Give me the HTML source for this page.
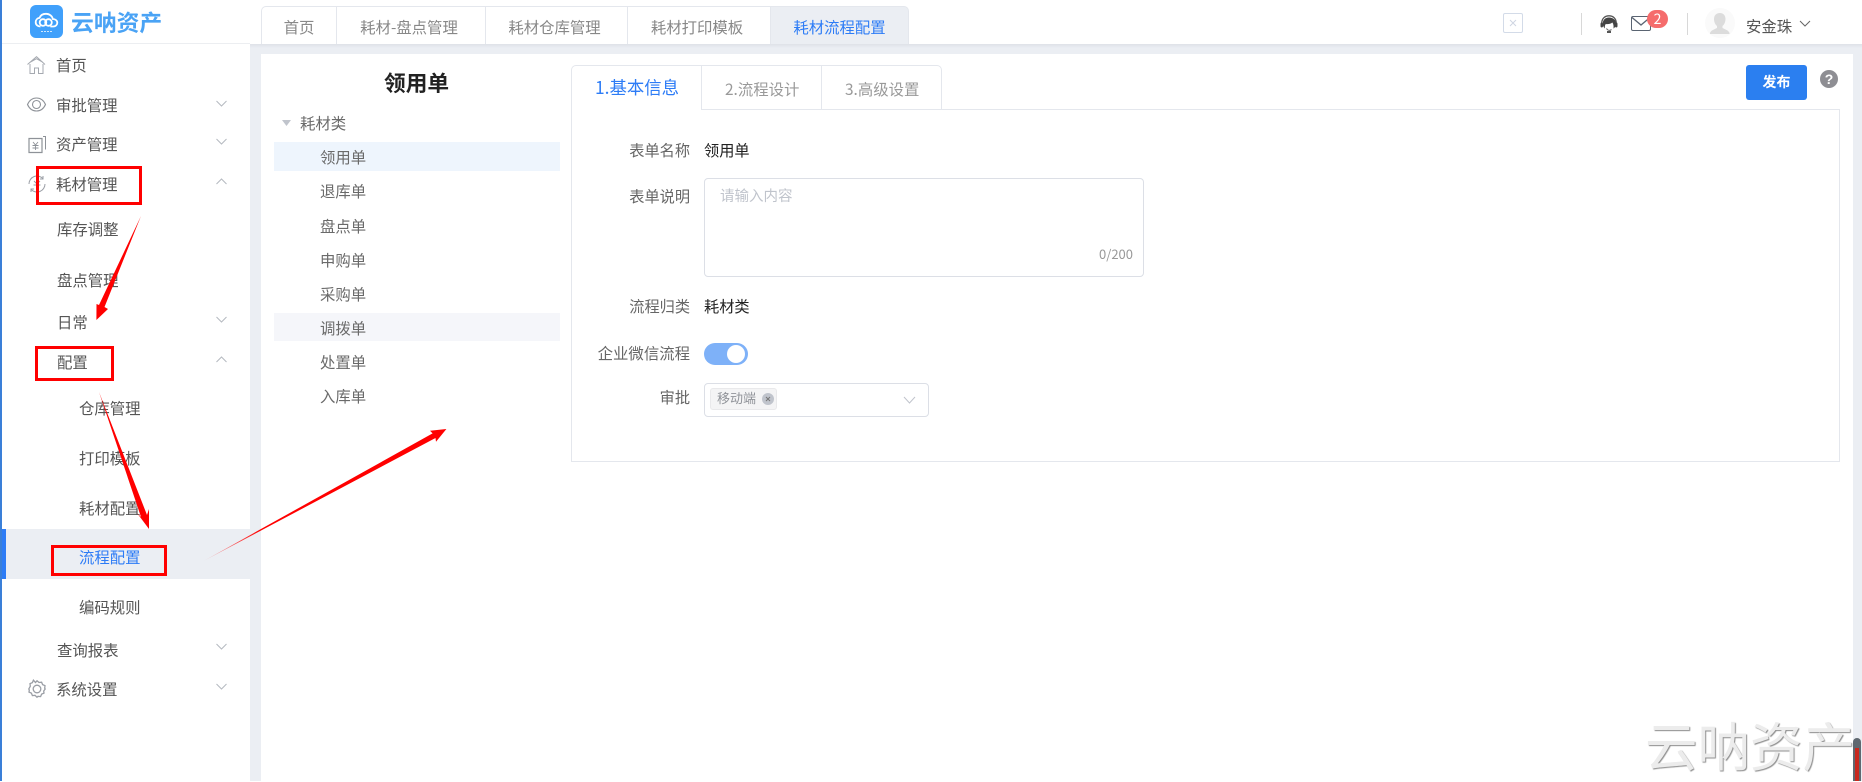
<!DOCTYPE html>
<html lang="zh">
<head>
<meta charset="utf-8">
<title>云呐资产</title>
<style>
html,body{margin:0;padding:0;background:#fff}
body{position:relative;width:1862px;height:781px;overflow:hidden;font-family:"Noto Sans CJK SC","Liberation Sans",sans-serif;color:#555}
div,span{box-sizing:border-box}
.a{position:absolute}
.t{position:absolute;white-space:nowrap;line-height:20px;height:20px;font-size:15.4px;color:#555}
.tab{position:absolute;top:6px;height:38px;background:#fff;border:1px solid #e4e7ed;border-bottom:0;border-left:0;text-align:center;line-height:40px;font-size:15.4px;color:#888}
.it{color:#6a6a6a}
.lb{position:absolute;white-space:nowrap;line-height:20px;height:20px;font-size:15.2px;color:#666;right:1172px;text-align:right}
.val{position:absolute;white-space:nowrap;line-height:20px;height:20px;font-size:15.2px;color:#222;left:704px}
.rb{position:absolute;border:3px solid #f00;box-sizing:border-box}
svg{position:absolute;overflow:visible}
</style>
</head>
<body>
<!-- page backgrounds -->
<div class="a" style="left:250px;top:44px;width:1612px;height:737px;background:#ebeef3"></div>
<div class="a" style="left:250px;top:44px;width:1612px;height:4px;background:linear-gradient(#dfe2e8,#ebeef3)"></div>
<div class="a" style="left:261px;top:54px;width:1592px;height:727px;background:#fff"></div>
<div class="a" style="left:0;top:0;width:1.500px;height:781px;background:#3a7fd8"></div>
<div class="a" style="left:2px;top:43px;width:248px;height:1px;background:#eceef1"></div>

<!-- logo -->
<div class="a" style="left:30px;top:5px;width:33px;height:33px;border-radius:6px;background:#40a0fb"></div>
<svg style="left:30px;top:5px" width="33" height="33" viewBox="0 0 33 33" fill="none" stroke="#fff" stroke-width="1.800"><path d="M10.500 21.500c-2.800 0-4.800-1.800-4.800-4.300 0-2.300 1.600-4 3.800-4.300C10.500 10.300 13 8.800 16 8.800c3.500 0 6.300 2.300 6.800 5.200 2.400.2 4.500 1.500 4.500 3.800 0 2.200-1.900 3.700-4 3.700h-3"/><circle cx="13" cy="17.500" r="3.300"/><circle cx="18.500" cy="17.500" r="3.300"/><path d="M11 26.500h11" stroke-width="1" stroke-dasharray="2 1" opacity=".75"/></svg>
<div class="t" style="left:71px;top:12px;font-size:22.800px;font-weight:700;color:#4aa3f5">云呐资产</div>

<!-- top tabs -->
<div class="tab" style="left:261px;width:76px;border-left:1px solid #e4e7ed;border-top-left-radius:5px">首页</div>
<div class="tab" style="left:337px;width:149px;padding-right:4px">耗材-盘点管理</div>
<div class="tab" style="left:486px;width:142px;padding-right:4px">耗材仓库管理</div>
<div class="tab" style="left:628px;width:143px;padding-right:4px">耗材打印模板</div>
<div class="tab" style="left:771px;width:138px;background:#ebeef3;color:#2d7cf6;border-top-right-radius:5px">耗材流程配置</div>

<!-- header right -->
<div class="a" style="left:1503px;top:13px;width:20px;height:20px;border:1px solid #d3dbe8;border-radius:2px"></div>
<svg style="left:1503px;top:13px" width="20" height="20" fill="none" stroke="#cfd6e2" stroke-width="1"><path d="M7 7l6 6M13 7l-6 6"/></svg>
<div class="a" style="left:1581px;top:13px;width:1px;height:22px;background:#d8d8d8"></div>
<div class="a" style="left:1687px;top:13px;width:1px;height:22px;background:#d8d8d8"></div>
<svg style="left:1600px;top:15px" width="18" height="18" viewBox="0 0 18 18"><path d="M9 2.500C5 2.500 2.800 5 2.800 8.500c0 2.500 1 4 2 5 0-2 0-3.500 1-4.500 2 .3 5 0 6.500-1.500.8 1 1.500 2.500 1.200 6 1.500-1 2.700-2.800 2.700-5C16.200 5 13 2.500 9 2.500z" fill="#444"/><path d="M1.800 9V8C1.800 3.500 5 .8 9 .8s7.200 2.700 7.200 7.200v1" fill="none" stroke="#555" stroke-width="1.300"/><rect x=".5" y="7.500" width="2.500" height="5" rx="1.200" fill="#444"/><rect x="15" y="7.500" width="2.500" height="5" rx="1.200" fill="#444"/><path d="M6.500 13.500c1 2 3.500 2.500 5 1" fill="none" stroke="#666" stroke-width="1"/><path d="M7 16h4v2H7z" fill="#555"/></svg>
<div class="a" style="left:1631px;top:16px;width:20px;height:15px;border:1.500px solid #5a6472;border-radius:2px"></div>
<svg style="left:1631px;top:16px" width="20" height="15" fill="none" stroke="#5a6472" stroke-width="1.300"><path d="M1 1.500l9 7.500 9-7.500"/></svg>
<div class="a" style="left:1647px;top:10px;width:21px;height:18px;border-radius:9px;background:#f56c6c;color:#fff;font-size:14px;line-height:18px;text-align:center">2</div>
<div class="a" style="left:1705px;top:8px;width:30px;height:30px;border-radius:50%;background:#fafafa"></div>
<svg style="left:1705px;top:8px" width="30" height="30" viewBox="0 0 30 30"><path d="M15 5c3.500 0 5.500 2.500 5.500 6 0 3-1.200 5.500-3 7v2c2 1.200 6 2 7 5v1H5v-1c1-3 5-3.800 7-5v-2c-1.800-1.500-3-4-3-7 0-3.500 2-6 6-6z" fill="#dcdcdc"/></svg>
<div class="t" style="left:1746px;top:16px;color:#555">安金珠</div>
<svg style="left:1799px;top:20px" width="12" height="8" fill="none" stroke="#666" stroke-width="1"><path d="M1 1l5 5 5-5"/></svg>

<!-- sidebar -->
<div class="a" style="left:2px;top:529px;width:248px;height:50px;background:#ebeef3"></div>
<div class="a" style="left:2px;top:529px;width:4px;height:50px;background:#2d7cf6"></div>

<svg style="left:27px;top:56px" width="19" height="18" viewBox="0 0 19 18" fill="none" stroke="#a5a9b0" stroke-width="1"><path d="M.5 8.500L9.500.7l8.500 7.800M3 8v9.500h4.500v-5.500h4v5.500H16V8M3.500 6L9.500 2.700 15.500 6"/></svg>
<svg style="left:27px;top:96px" width="19" height="17" viewBox="0 0 19 17" fill="none" stroke="#8e9298" stroke-width="1.100"><path d="M.5 8.500C2.500 4 6 2 9.500 2s7 2 9 6.500c-2 4.500-5.500 6.500-9 6.500s-7-2-9-6.500z"/><circle cx="9.500" cy="8.500" r="4"/></svg>
<svg style="left:28px;top:134px" width="18" height="20" viewBox="0 0 18 20" fill="none" stroke="#8e9298" stroke-width="1"><path d="M1 4.500h13v14H1z" stroke-width="1.200"/><path d="M15 2.500h2.500v13"/><path d="M5 8l2.500 3L10 8M4.500 11.500h6M4.500 14h6M7.500 11v5" stroke-width=".9"/></svg>
<svg style="left:28px;top:175px" width="18" height="18" viewBox="0 0 18 18" fill="none" stroke="#9a9ea5" stroke-width="1"><path d="M1 9a8 8 0 0 1 14-5.300M17 9A8 8 0 0 1 3 14.300M15 1v3h-3M3 17v-3h3"/><path d="M6 6l3 3 3-3M5.500 10h7M9 9v5"/></svg>
<svg style="left:28px;top:680px" width="18" height="18" viewBox="0 0 18 18" fill="none" stroke="#9a9ea5" stroke-width="1.300"><path d="M9 .8l2 1.700 2.600-.3 1 2.400 2.400 1-.3 2.600L17.200 9l-1.500 2 .3 2.100-2.400 1-1 2.500-2.600-.3L9 17.200l-2-1.900-2.600.3-1-2.500-2.400-1 .3-2.100L.8 9l1.500-2.800L2 3.600l2.400-1 1-2.400L7.500 2.500z"/><circle cx="9" cy="9" r="3.800"/></svg>

<div class="t" style="left:56px;top:55px">首页</div>
<div class="t" style="left:56px;top:95px">审批管理</div>
<div class="t" style="left:56px;top:134px">资产管理</div>
<div class="t" style="left:56px;top:174px">耗材管理</div>
<div class="t" style="left:57px;top:219px">库存调整</div>
<div class="t" style="left:57px;top:270px">盘点管理</div>
<div class="t" style="left:57px;top:312px">日常</div>
<div class="t" style="left:57px;top:352px">配置</div>
<div class="t" style="left:79px;top:398px">仓库管理</div>
<div class="t" style="left:79px;top:448px">打印模板</div>
<div class="t" style="left:79px;top:498px">耗材配置</div>
<div class="t" style="left:79px;top:547px;color:#2d7cf6">流程配置</div>
<div class="t" style="left:79px;top:597px">编码规则</div>
<div class="t" style="left:57px;top:640px">查询报表</div>
<div class="t" style="left:56px;top:679px">系统设置</div>

<svg style="left:216px;top:100px" width="11" height="7" fill="none" stroke="#b5b9c0" stroke-width="1"><path d="M.5 1l5 5 5-5"/></svg>
<svg style="left:216px;top:138px" width="11" height="7" fill="none" stroke="#b5b9c0" stroke-width="1"><path d="M.5 1l5 5 5-5"/></svg>
<svg style="left:216px;top:178px" width="11" height="7" fill="none" stroke="#b5b9c0" stroke-width="1"><path d="M.5 6l5-5 5 5"/></svg>
<svg style="left:216px;top:316px" width="11" height="7" fill="none" stroke="#b5b9c0" stroke-width="1"><path d="M.5 1l5 5 5-5"/></svg>
<svg style="left:216px;top:356px" width="11" height="7" fill="none" stroke="#b5b9c0" stroke-width="1"><path d="M.5 6l5-5 5 5"/></svg>
<svg style="left:216px;top:643px" width="11" height="7" fill="none" stroke="#b5b9c0" stroke-width="1"><path d="M.5 1l5 5 5-5"/></svg>
<svg style="left:216px;top:683px" width="11" height="7" fill="none" stroke="#b5b9c0" stroke-width="1"><path d="M.5 1l5 5 5-5"/></svg>

<!-- tree panel -->
<div class="t" style="left:384px;top:73px;font-size:21.700px;font-weight:700;color:#222">领用单</div>
<svg style="left:282px;top:120px" width="9" height="7"><path d="M0 0h9L4.500 6z" fill="#c0c4cc"/></svg>
<div class="t it" style="left:300px;top:113px">耗材类</div>
<div class="a" style="left:274px;top:142px;width:286px;height:29px;background:#eef5fd"></div>
<div class="a" style="left:274px;top:313px;width:286px;height:28px;background:#f5f6fa"></div>
<div class="t it" style="left:320px;top:147px">领用单</div>
<div class="t it" style="left:320px;top:181px">退库单</div>
<div class="t it" style="left:320px;top:216px">盘点单</div>
<div class="t it" style="left:320px;top:250px">申购单</div>
<div class="t it" style="left:320px;top:284px">采购单</div>
<div class="t it" style="left:320px;top:318px">调拨单</div>
<div class="t it" style="left:320px;top:352px">处置单</div>
<div class="t it" style="left:320px;top:386px">入库单</div>

<!-- form tabs -->
<div class="a" style="left:571px;top:109px;width:1269px;height:353px;border:1px solid #e4e7ed"></div>
<div class="a" style="left:571px;top:65px;width:131px;height:45px;border:1px solid #e4e7ed;border-bottom:0;border-top-left-radius:5px;background:#fff"></div>
<div class="a" style="left:701px;top:65px;width:121px;height:45px;border:1px solid #e4e7ed;background:#fff"></div>
<div class="a" style="left:821px;top:65px;width:121px;height:45px;border:1px solid #e4e7ed;border-top-right-radius:5px;background:#fff"></div>
<div class="t" style="left:595px;top:78px;font-size:17.400px;color:#2d7cf6">1.基本信息</div>
<div class="t" style="left:725px;top:79px;color:#999">2.流程设计</div>
<div class="t" style="left:845px;top:79px;color:#999">3.高级设置</div>

<!-- publish -->
<div class="a" style="left:1746px;top:65px;width:61px;height:35px;border-radius:3px;background:#2b7ff0;color:#fff;font-size:14px;font-weight:700;text-align:center;line-height:35px">发布</div>
<div class="a" style="left:1820px;top:70px;width:18px;height:18px;border-radius:50%;background:#8e8e93;color:#fff;font-size:14px;font-weight:700;text-align:center;line-height:18px;font-family:'Liberation Sans',sans-serif">?</div>

<!-- form -->
<div class="lb" style="top:140px">表单名称</div>
<div class="val" style="top:140px">领用单</div>
<div class="lb" style="top:186px">表单说明</div>
<div class="a" style="left:704px;top:178px;width:440px;height:99px;border:1px solid #dcdfe6;border-radius:4px"></div>
<div class="t" style="left:720px;top:186px;font-size:14.500px;color:#c0c4cc">请输入内容</div>
<div class="t" style="left:1098px;top:244px;font-size:13px;color:#999;width:35px;text-align:right">0/200</div>
<div class="lb" style="top:296px">流程归类</div>
<div class="val" style="top:296px">耗材类</div>
<div class="lb" style="top:343px;font-size:15.4px">企业微信流程</div>
<div class="a" style="left:704px;top:343px;width:44px;height:22px;border-radius:11px;background:#7eb1f8"></div>
<div class="a" style="left:727px;top:345px;width:18px;height:18px;border-radius:50%;background:#fff"></div>
<div class="lb" style="top:387px">审批</div>
<div class="a" style="left:704px;top:383px;width:225px;height:34px;border:1px solid #dcdfe6;border-radius:4px"></div>
<div class="a" style="left:710px;top:388px;width:67px;height:22px;background:#f4f4f5;border:1px solid #e9e9eb;border-radius:3px"></div>
<div class="t" style="left:717px;top:388px;font-size:13px;color:#909399">移动端</div>
<div class="a" style="left:762px;top:393px;width:12px;height:12px;border-radius:50%;background:#c0c4cc"></div>
<svg style="left:762px;top:393px" width="12" height="12" fill="none" stroke="#777" stroke-width="1"><path d="M4 4l4 4M8 4l-4 4"/></svg>
<svg style="left:903px;top:396px" width="13" height="8" fill="none" stroke="#c0c4cc" stroke-width="1"><path d="M1 1l5.500 6L12 1"/></svg>

<!-- watermark -->
<div class="a" style="left:1645px;top:714px;font-size:52.500px;line-height:60px;white-space:nowrap;color:#ececec;text-shadow:1px 1px 1px #8d8d8d">云呐资产</div>
<div class="a" style="left:1853px;top:738px;width:8px;height:43px;background:#5f6870;border-radius:4px 4px 0 0"></div>
<div class="a" style="left:1855px;top:748px;width:4px;height:33px;background:#c8281e"></div>

<!-- annotations -->
<div class="rb" style="left:36px;top:166px;width:106px;height:39px"></div>
<div class="rb" style="left:35px;top:346px;width:79px;height:35px"></div>
<div class="rb" style="left:51px;top:545px;width:116px;height:31px"></div>
<svg style="left:0;top:0" width="1862" height="781">
<defs>
<linearGradient id="g3" gradientUnits="userSpaceOnUse" x1="203" y1="561" x2="260" y2="530"><stop offset="0" stop-color="#f00" stop-opacity=".15"/><stop offset="1" stop-color="#f00"/></linearGradient>
</defs>
<polygon points="141,216 104.500,307 108,309 96.400,320 96.500,304 99,305" fill="#f00"/>
<polygon points="99,392 147,515 149,509 149,529 137,513 141,517" fill="#f00"/>
<polygon points="203.600,561 435.500,438 436,441.700 446.400,429 430,430.700 432.600,433.400" fill="url(#g3)"/>
</svg>
</body>
</html>
